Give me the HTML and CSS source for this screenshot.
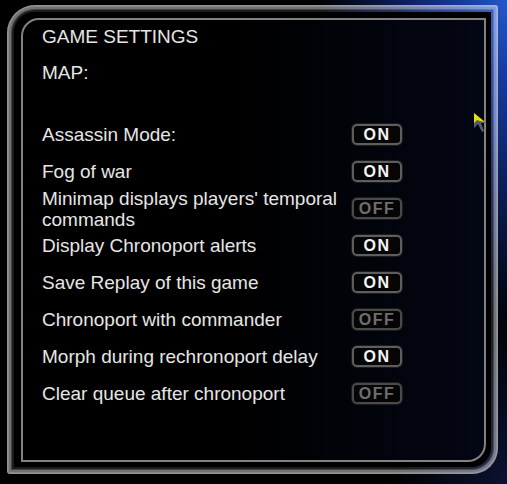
FILE: index.html
```html
<!doctype html>
<html>
<head>
  <meta charset="utf-8">
  <title>Game Settings</title>
  <link rel="stylesheet" href="styles.css">
</head>
<body>

  <div class="frame">
    <div class="frame-inner">
      <div class="panel">
        <h1 class="title">GAME SETTINGS</h1>
        <div class="map">MAP:</div>

        <div class="options">
          <div class="label">Assassin Mode:</div>
          <div class="toggle on">ON</div>

          <div class="label">Fog of war</div>
          <div class="toggle on">ON</div>

          <div class="label">Minimap displays players' temporal commands</div>
          <div class="toggle off">OFF</div>

          <div class="label">Display Chronoport alerts</div>
          <div class="toggle on">ON</div>

          <div class="label">Save Replay of this game</div>
          <div class="toggle on">ON</div>

          <div class="label">Chronoport with commander</div>
          <div class="toggle off">OFF</div>

          <div class="label">Morph during rechronoport delay</div>
          <div class="toggle on">ON</div>

          <div class="label">Clear queue after chronoport</div>
          <div class="toggle off">OFF</div>
        </div>
      </div>
    </div>
  </div>

  <!-- mouse pointer -->
  <svg class="cursor" width="16" height="22" viewBox="0 0 16 22">
    <polygon points="1,1 1,16 5,12 9,20 11,19 8,11 13,11" fill="#5a5e68"/>
    <polygon points="1,1 1,11 4,8 7,9 12,10" fill="#e8e000"/>
  </svg>

</body>
</html>
```

FILE: styles.css
```css
body {
  margin: 0;
  width: 507px;
  height: 484px;
  overflow: hidden;
  font-family: "Liberation Sans", Arial, sans-serif;
  color: #e6e6e6;
  background:
    radial-gradient(ellipse 190px 330px at 100% 0%, #2458c8 0, #16399a 25%, #0c1f5a 55%, rgba(6,12,40,0) 100%),
    radial-gradient(ellipse 120px 200px at 100% 100%, #0b1230 0, rgba(0,0,0,0) 100%),
    #000;
}
.frame {
  margin: 5px 0 0 7px;
  width: 491px;
  height: 469px;
  box-sizing: border-box;
  padding: 7px;
  border-radius: 28px 3px 26px 3px;
  box-shadow:
    inset 0 0 0 1px rgba(255,255,255,0.10),
    inset 0 0 0 2px rgba(255,255,255,0.16),
    inset 0 0 0 4px rgba(255,255,255,0.24),
    inset 0 0 0 5px rgba(255,255,255,0.18),
    inset 0 0 0 7px rgba(255,255,255,0.11);
}
.frame-inner {
  height: 100%;
  box-sizing: border-box;
  padding: 6px 5px 5px 7px;
  background: #000;
  border-radius: 21px 0 20px 0;
}
.panel {
  position: relative;
  height: 100%;
  box-sizing: border-box;
  padding: 7px 0 0 19px;
  border: 2px solid #828282;
  border-radius: 18px 0 18px 0;
  background: linear-gradient(to right, #000 45%, #030714 100%);
}
.title {
  margin: 0;
  font-size: 19px;
  font-weight: normal;
  line-height: 20px;
}
.map {
  margin-top: 16px;
  font-size: 19px;
  line-height: 20px;
}
.options {
  margin-top: 33px;
  width: 360px;
  display: grid;
  grid-template-columns: 1fr 50px;
  grid-auto-rows: 37px;
  column-gap: 8px;
  align-items: center;
}
.label {
  font-size: 19px;
  line-height: 21px;
}
.toggle {
  height: 21px;
  box-sizing: border-box;
  border: 2px solid #5e5e5e;
  border-radius: 5px;
  background: #050505;
  box-shadow: 0 0 0 1px #1c1c1c;
  font-size: 16px;
  font-weight: bold;
  line-height: 17px;
  letter-spacing: 1.5px;
  text-align: center;
}
.on {
  color: #f4f4f4;
}
.off {
  color: #6e6e6e;
  border-color: #4a4a4a;
}
.cursor {
  position: absolute;
  left: 473px;
  top: 112px;
}
```
